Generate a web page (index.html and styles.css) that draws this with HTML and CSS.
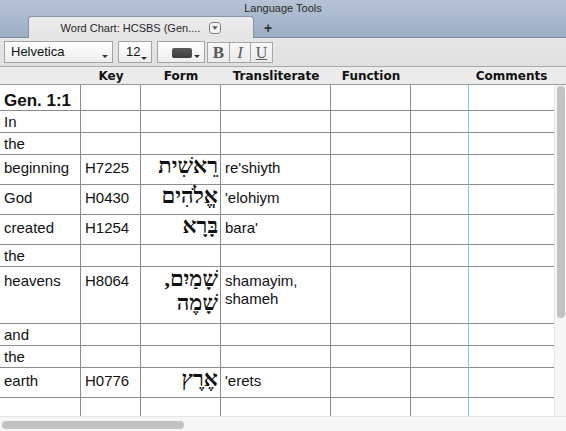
FILE: index.html
```html
<!DOCTYPE html>
<html>
<head>
<meta charset="utf-8">
<title>Language Tools</title>
<link rel="stylesheet" href="styles.css">
</head>
<body>
<div class="window">
  <div class="titlebar">
    <div class="title">Language Tools</div>
    <div class="tabrow">
      <div class="tab">
        <span class="tab-label">Word Chart: HCSBS (Gen....</span>
        <svg class="tab-menu" width="12" height="12" viewBox="0 0 12 12"><rect x="0.5" y="0.5" width="11" height="11" rx="3" fill="#f3f3f3" stroke="#7a7a7a"/><path d="M3.2 4.3 L8.8 4.3 L6 7.8 Z" fill="#5a5a5a"/></svg>
      </div>
      <div class="tab-add">+</div>
    </div>
  </div>

  <div class="toolbar">
    <div class="combo font-combo"><span>Helvetica</span><i class="arrow"></i></div>
    <div class="combo size-combo"><span>12</span><i class="arrow low"></i></div>
    <div class="combo color-combo"><span class="swatch"></span><i class="arrow"></i></div>
    <div class="fmt-group">
      <span class="fmt fmt-b">B</span>
      <span class="fmt fmt-i">I</span>
      <span class="fmt fmt-u">U</span>
    </div>
  </div>

  <div class="colheads">
    <div class="ch c1"></div>
    <div class="ch c2">Key</div>
    <div class="ch c3">Form</div>
    <div class="ch c4">Transliterate</div>
    <div class="ch c5">Function</div>
    <div class="ch c6"></div>
    <div class="ch c7">Comments</div>
  </div>

  <div class="sheet-body">
    <div class="grid-wrap">
      <table class="grid">
        <colgroup>
          <col class="w1"><col class="w2"><col class="w3"><col class="w4"><col class="w5"><col class="w6"><col class="w7">
        </colgroup>
        <tbody>
          <tr class="r-ref"><td class="ref">Gen. 1:1</td><td></td><td></td><td></td><td></td><td class="blue"></td><td></td></tr>
          <tr class="r-n"><td>In</td><td></td><td></td><td></td><td></td><td class="blue"></td><td></td></tr>
          <tr class="r-n"><td>the</td><td></td><td></td><td></td><td></td><td class="blue"></td><td></td></tr>
          <tr class="r-h"><td>beginning</td><td>H7225</td><td class="heb"><span dir="rtl" lang="he">רֵאשִׁית</span></td><td>re'shiyth</td><td></td><td class="blue"></td><td></td></tr>
          <tr class="r-h"><td>God</td><td>H0430</td><td class="heb"><span dir="rtl" lang="he">אֱלֹהִים</span></td><td>'elohiym</td><td></td><td class="blue"></td><td></td></tr>
          <tr class="r-h"><td>created</td><td>H1254</td><td class="heb"><span dir="rtl" lang="he">בָּרָא</span></td><td>bara'</td><td></td><td class="blue"></td><td></td></tr>
          <tr class="r-n"><td>the</td><td></td><td></td><td></td><td></td><td class="blue"></td><td></td></tr>
          <tr class="r-hv"><td>heavens</td><td>H8064</td><td class="heb"><span dir="rtl" lang="he">שָׁמַיִם,</span><br><span dir="rtl" lang="he">שָׁמֶה</span></td><td>shamayim,<br>shameh</td><td></td><td class="blue"></td><td></td></tr>
          <tr class="r-n"><td>and</td><td></td><td></td><td></td><td></td><td class="blue"></td><td></td></tr>
          <tr class="r-n"><td>the</td><td></td><td></td><td></td><td></td><td class="blue"></td><td></td></tr>
          <tr class="r-h"><td>earth</td><td>H0776</td><td class="heb"><span dir="rtl" lang="he">אֶרֶץ</span></td><td>'erets</td><td></td><td class="blue"></td><td></td></tr>
          <tr class="r-n"><td></td><td></td><td></td><td></td><td></td><td class="blue"></td><td></td></tr>
        </tbody>
      </table>
    </div>
    <div class="vscroll"><div class="vthumb"></div></div>
  </div>

  <div class="hscroll"><div class="hthumb"></div></div>
</div>
</body>
</html>
```

FILE: styles.css
```css
* { box-sizing: border-box; }

html, body {
  margin: 0;
  padding: 0;
}

body {
  width: 566px;
  height: 431px;
  overflow: hidden;
  background: #ffffff;
  font-family: "Liberation Sans", Arial, sans-serif;
  color: #111;
}

.window {
  width: 566px;
  height: 431px;
  display: flex;
  flex-direction: column;
  overflow: hidden;
}

/* ---------- title bar with tabs ---------- */
.titlebar {
  height: 38px;
  flex: none;
  background: linear-gradient(#b6c3d6, #9cadc4);
  border-bottom: 1px solid #7f8ca3;
  display: flex;
  flex-direction: column;
}

.title {
  height: 16px;
  line-height: 17px;
  text-align: center;
  font-size: 11px;
  color: #2a2a2a;
}

.tabrow {
  flex: 1;
  display: flex;
  align-items: flex-end;
  padding-left: 28px;
}

.tab {
  width: 226px;
  height: 22px;
  margin-bottom: -1px;
  background: linear-gradient(#ededed, #e4e4e4);
  border: 1px solid #8692a6;
  border-bottom: none;
  border-radius: 4px 4px 0 0;
  display: flex;
  align-items: center;
  justify-content: center;
  gap: 9px;
  padding-top: 1px;
}

.tab-label {
  font-size: 11px;
  color: #262626;
}

.tab-menu { display: block; }

.tab-add {
  margin-left: 10px;
  align-self: center;
  margin-top: 3px;
  font-size: 14px;
  font-weight: bold;
  color: #333;
  line-height: 14px;
}

/* ---------- toolbar ---------- */
.toolbar {
  height: 29px;
  flex: none;
  background: linear-gradient(#e6e6e6, #e0e0e0);
  border-bottom: 1px solid #a9a9a9;
  display: flex;
  align-items: flex-start;
  padding: 3px 0 0 4px;
}

.combo {
  position: relative;
  height: 22px;
  border: 1px solid #a3a3a3;
  background: linear-gradient(#ffffff, #ededed);
  font-size: 13px;
  line-height: 20px;
  color: #111;
}

.font-combo { width: 109px; padding-left: 6px; }
.size-combo { width: 34px; margin-left: 5px; padding-left: 7px; }
.color-combo { width: 48px; margin-left: 5px; }

.arrow {
  position: absolute;
  right: 4px;
  top: 13px;
  width: 0;
  height: 0;
  border-left: 3px solid transparent;
  border-right: 3px solid transparent;
  border-top: 3px solid #333;
}
.arrow.low { top: 15px; }

.swatch {
  position: absolute;
  left: 14px;
  top: 6px;
  width: 20px;
  height: 10px;
  border-radius: 2px;
  background: linear-gradient(#5a5a5a, #3c3c3c);
}

.fmt-group {
  display: flex;
  margin-left: 2px;
  margin-top: 1px;
}

.fmt {
  height: 21px;
  border: 1px solid #a8a8a8;
  background: linear-gradient(#f7f7f7, #ebebeb);
  font-family: "Liberation Serif", "Times New Roman", serif;
  font-size: 17px;
  line-height: 19px;
  color: #5a5a5a;
  text-align: center;
}
.fmt + .fmt { margin-left: -1px; }
.fmt-b { width: 23px; font-weight: bold; }
.fmt-i { width: 22px; font-style: italic; }
.fmt-u { width: 23px; text-decoration: underline; font-size: 16px; }

/* ---------- column headers ---------- */
.colheads {
  height: 18px;
  flex: none;
  display: flex;
  background: #ebebeb;
  border-bottom: 1px solid #9a9a9a;
}

.ch {
  font-family: "DejaVu Sans", "Liberation Sans", sans-serif;
  font-weight: bold;
  font-size: 12px;
  line-height: 18px;
  color: #111;
  text-align: center;
  flex: none;
}

.c1 { width: 81px; }
.c2 { width: 60px; }
.c3 { width: 80px; }
.c4 { width: 110px; }
.c5 { width: 80px; }
.c6 { width: 58px; }
.c7 { width: 85px; }

/* ---------- sheet ---------- */
.sheet-body {
  height: 331px;
  flex: none;
  display: flex;
  overflow: hidden;
}

.grid-wrap {
  width: 554px;
  flex: none;
  overflow: hidden;
}

.grid {
  width: 554px;
  table-layout: fixed;
  border-collapse: separate;
  border-spacing: 0;
}

.w1 { width: 81px; }
.w2 { width: 60px; }
.w3 { width: 80px; }
.w4 { width: 110px; }
.w5 { width: 80px; }
.w6 { width: 58px; }
.w7 { width: 85px; }

.grid td {
  border-right: 1px solid #8c8c8c;
  border-bottom: 1px solid #8c8c8c;
  padding: 2px 3px 0 4px;
  vertical-align: baseline;
  font-size: 15px;
  line-height: 18px;
  color: #111;
  white-space: nowrap;
}
.grid td:last-child { border-right: none; }
.grid td.blue { border-right-color: #79cdee; }

.grid td.ref {
  font-weight: bold;
  font-size: 17px;
  line-height: 17px;
  padding-top: 7px;
}

.grid td.heb {
  text-align: right;
  padding: 0 2px 0 2px;
  font-family: "Liberation Serif", "DejaVu Serif", "Times New Roman", serif;
  font-weight: bold;
  font-size: 22px;
  line-height: 21px;
}
.r-hv td.heb { line-height: 24px; }

.r-ref { height: 26px; }
.r-n { height: 22px; }
.r-h { height: 30px; }
.r-hv { height: 57px; }

/* ---------- scrollbars ---------- */
.vscroll {
  flex: 1;
  background: #f6f6f6;
  border-left: 1px solid #e4e4e4;
  padding: 1px 0 0 2px;
}

.vthumb {
  width: 8px;
  height: 232px;
  border-radius: 4px;
  background: #c2c2c2;
}

.hscroll {
  height: 15px;
  flex: none;
  background: #f6f6f6;
  border-top: 1px solid #e4e4e4;
  padding: 4px 0 0 2px;
}

.hthumb {
  width: 182px;
  height: 8px;
  border-radius: 4px;
  background: #c2c2c2;
}
```
